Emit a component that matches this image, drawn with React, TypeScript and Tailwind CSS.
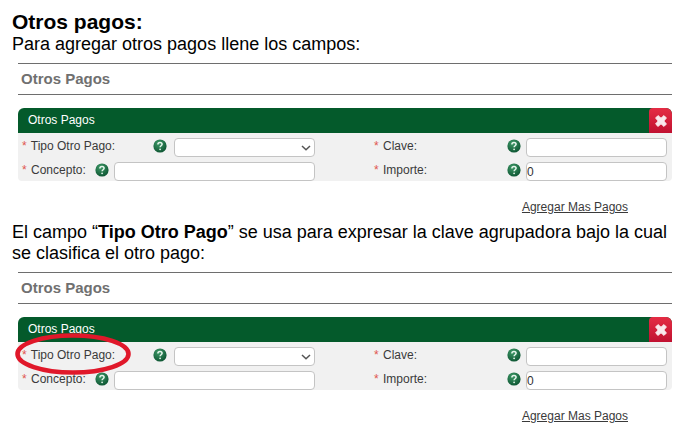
import { useId } from "react";

function HelpIcon() {
  return (
    <svg viewBox="0 0 14 14" className="mt-px size-[14px] shrink-0" role="img" aria-label="Ayuda">
      <defs>
        <radialGradient id="help-fill" cx="0.4" cy="0.3" r="0.75">
          <stop offset="0" stopColor="#3f9a68" />
          <stop offset="1" stopColor="#0b5230" />
        </radialGradient>
      </defs>
      <circle cx="7" cy="7" r="6.6" fill="url(#help-fill)" />
      <path
        d="M4.9 5.5C4.9 4.2 5.8 3.5 7 3.5s2.1.7 2.1 1.8c0 1.4-2 1.5-2 3"
        fill="none"
        stroke="#e6f5ec"
        strokeWidth="1.5"
      />
      <circle cx="7.1" cy="10.3" r="0.9" fill="#e6f5ec" />
    </svg>
  );
}

function CloseIcon() {
  return (
    <svg viewBox="0 0 12 12" className="size-3" aria-hidden="true">
      <path
        d="M3 0.6 6 3.2 9 0.6 11.4 3 8.8 6l2.6 3L9 11.4 6 8.8l-3 2.6L0.6 9l2.6-3L0.6 3z"
        fill="#f9e9ec"
        stroke="#f9e9ec"
        strokeWidth="1"
        strokeLinejoin="round"
      />
    </svg>
  );
}

function FieldLabel({ htmlFor, text, circled = false }: { htmlFor: string; text: string; circled?: boolean }) {
  return (
    <label htmlFor={htmlFor} className="relative whitespace-nowrap">
      <span className="mr-px text-[#e0564f]">*</span> {text}
      {circled && (
        <svg viewBox="0 0 116 42" className="absolute -top-3.5 -left-[7px] h-[42px] w-[116px] max-w-none" aria-hidden="true">
          <ellipse cx="58" cy="21" rx="55.5" ry="18.5" fill="none" stroke="#e0182a" strokeWidth="4.6" />
        </svg>
      )}
    </label>
  );
}

const box = "h-[19px] rounded-sm border border-[#c4c4c4] bg-white text-xs text-[#333]";

function PaymentSection({ circled = false }: { circled?: boolean }) {
  const id = useId();
  return (
    <section className="mt-2 mr-[19px] ml-[18px]">
      <h2 className="border-y border-[#6e6e6e] px-[3px] text-[15px] leading-[30px] font-bold text-[#707070]">
        Otros Pagos
      </h2>
      <form className="mt-[13px] text-xs text-[#3a3a3a]">
        <div className="flex h-[25px] items-stretch justify-between overflow-hidden rounded-t-md bg-[#045a2b]">
          <h3 className="pl-[10px] leading-6 text-white">Otros Pagos</h3>
          <button
            type="button"
            aria-label="Cerrar"
            className="flex w-[23px] items-center justify-center rounded-t-sm bg-gradient-to-b from-[#e52c44] to-[#c01030]"
          >
            <CloseIcon />
          </button>
        </div>
        <div className="grid grid-cols-2 gap-x-[59px] gap-y-[5px] rounded-b-sm bg-[#f1f1f1] pt-[5px] pr-[5px] pl-1 leading-4">
          <div className="flex items-start">
            <FieldLabel htmlFor={id + "tipo"} text="Tipo Otro Pago:" circled={circled} />
            <div className="ml-auto flex items-start gap-[7px]">
              <HelpIcon />
              <div className="relative flex">
                <select id={id + "tipo"} className={box + " w-[141px] appearance-none"} defaultValue="">
                  <option value=""></option>
                </select>
                <svg
                  viewBox="0 0 10 6"
                  className="pointer-events-none absolute top-[7px] right-1 h-[6px] w-[10px]"
                  aria-hidden="true"
                >
                  <path d="M1 1l4 3.8L9 1" fill="none" stroke="#555" strokeWidth="1.5" />
                </svg>
              </div>
            </div>
          </div>
          <div className="flex items-start gap-[5px]">
            <FieldLabel htmlFor={id + "clave"} text="Clave:" />
            <span className="ml-auto flex">
              <HelpIcon />
            </span>
            <input id={id + "clave"} type="text" className={box + " w-[141px]"} />
          </div>
          <div className="flex items-start gap-[5px]">
            <FieldLabel htmlFor={id + "concepto"} text="Concepto:" />
            <span className="ml-auto flex">
              <HelpIcon />
            </span>
            <input id={id + "concepto"} type="text" className={box + " w-[201px]"} />
          </div>
          <div className="flex items-start gap-[5px]">
            <FieldLabel htmlFor={id + "importe"} text="Importe:" />
            <span className="ml-auto flex">
              <HelpIcon />
            </span>
            <input id={id + "importe"} type="text" defaultValue="0" className={box + " w-[141px]"} />
          </div>
        </div>
        <div className="mt-[19px] flex justify-end pr-11 leading-[14px]">
          <a href="#agregar" className="underline">
            Agregar Mas Pagos
          </a>
        </div>
      </form>
    </section>
  );
}

export default function App() {
  return (
    <main className="bg-white pt-[10px] font-['Liberation_Sans',Arial,sans-serif] text-black">
      <h1 className="pl-3 text-[21px] leading-6 font-bold">Otros pagos:</h1>
      <p className="pl-3 text-lg leading-[21px]">Para agregar otros pagos llene los campos:</p>
      <PaymentSection />
      <p className="mt-2 pl-3 text-lg leading-[21px]">
        El campo “<strong>Tipo Otro Pago</strong>” se usa para expresar la clave agrupadora bajo la cual
        <br />
        se clasifica el otro pago:
      </p>
      <PaymentSection circled />
    </main>
  );
}
